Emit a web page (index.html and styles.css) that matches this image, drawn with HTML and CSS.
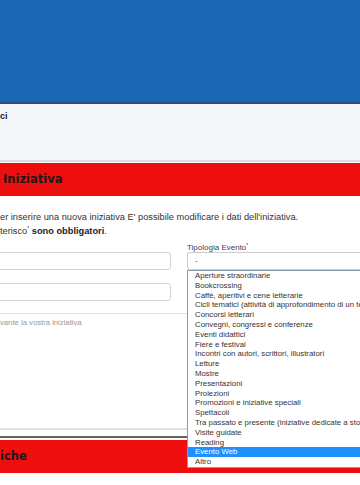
FILE: index.html
```html
<!DOCTYPE html>
<html lang="it">
<head>
<meta charset="utf-8">
<title>Nuova Iniziativa</title>
<link rel="stylesheet" href="styles.css">
</head>
<body>
<header class="topbar"></header>
<section class="notice">
  <p class="notice-text">ci</p>
</section>
<h2 class="section-title">Iniziativa</h2>
<div class="form-area">
  <p class="intro">er inserire una nuova iniziativa E' possibile modificare i dati dell'iniziativa.<br>terisco<sup>*</sup> <b>sono obbligatori</b>.</p>
  <div class="grid">
    <div class="col-left">
      <div class="spacer-label"></div>
      <div class="input"></div>
      <div class="input second"></div>
    </div>
    <div class="col-right">
      <label class="label">Tipologia Evento<sup>*</sup></label>
      <div class="select-wrap">
        <div class="select">-</div>
        <ul class="dropdown">
          <li>Aperture straordinarie</li>
          <li>Bookcrossing</li>
          <li>Caffè, aperitivi e cene letterarie</li>
          <li>Cicli tematici (attività di approfondimento di un tema)</li>
          <li>Concorsi letterari</li>
          <li>Convegni, congressi e conferenze</li>
          <li>Eventi didattici</li>
          <li>Fiere e festival</li>
          <li>Incontri con autori, scrittori, illustratori</li>
          <li>Letture</li>
          <li>Mostre</li>
          <li>Presentazioni</li>
          <li>Proiezioni</li>
          <li>Promozioni e iniziative speciali</li>
          <li>Spettacoli</li>
          <li>Tra passato e presente (iniziative dedicate a storia e memoria)</li>
          <li>Visite guidate</li>
          <li>Reading</li>
          <li class="selected">Evento Web</li>
          <li>Altro</li>
        </ul>
      </div>
    </div>
  </div>
  <div class="rule"></div>
  <p class="hint">vante la vostra iniziativa</p>
  <div class="blank"></div>
</div>
<div class="rule light"></div>
<div class="rule dark"></div>
<h2 class="section-title second">iche</h2>
</body>
</html>
```
FILE: styles.css
```css
html, body {
  margin: 0;
  padding: 0;
  overflow: hidden;
  background: #fff;
  font-family: "Liberation Sans", Arial, sans-serif;
}
.topbar {
  height: 102px;
  background: #1a66b2;
  border-bottom: 2px solid #33488a;
}
.notice {
  height: 58px;
  background: #f3f7f9;
  border-bottom: 2px solid #dcdcdc;
  box-sizing: border-box;
}
.notice-text {
  margin: 0;
  padding-top: 7px;
  font-size: 9px;
  font-weight: bold;
  color: #222;
}
.section-title {
  margin: 1px 0 0;
  height: 33px;
  background: #ee0e0e;
  color: #1a1a1a;
  font-family: "DejaVu Sans", Verdana, sans-serif;
  font-weight: bold;
  font-size: 11.5px;
  line-height: 33px;
  padding-left: 3px;
}
.section-title.second {
  margin-top: 2px;
  padding-left: 0;
}
.form-area {
  padding-top: 16px;
}
.intro {
  margin: 0;
  font-size: 9.25px;
  line-height: 11px;
  color: #333;
}
.intro sup {
  font-size: 5px;
  vertical-align: 4px;
}
.intro b {
  color: #222;
}
.grid {
  display: grid;
  grid-template-columns: 175px 1fr;
  gap: 16px;
  margin-top: 3px;
  margin-left: -4px;
}
.spacer-label {
  height: 12px;
}
.input {
  height: 18px;
  border: 1px solid #d4d4d4;
  border-radius: 3px;
  box-sizing: border-box;
}
.input.second {
  margin-top: 13px;
}
.label {
  display: block;
  height: 12px;
  font-size: 8px;
  line-height: 10px;
  color: #444;
}
.label sup {
  font-size: 5px;
  vertical-align: 3px;
}
.select-wrap {
  position: relative;
}
.select {
  height: 18px;
  border: 1px solid #ccc;
  border-right: none;
  border-radius: 3px 0 0 3px;
  box-sizing: border-box;
  font-size: 8px;
  line-height: 16px;
  padding-left: 7px;
  color: #555;
}
.dropdown {
  position: absolute;
  left: 0;
  top: 18px;
  width: 200px;
  margin: 0;
  padding: 0;
  list-style: none;
  background: #fff;
  border: 1px solid #8a9ab0;
  font-size: 7.8px;
  line-height: 9.8px;
  color: #333;
  white-space: nowrap;
  z-index: 2;
}
.dropdown li {
  padding-left: 7px;
}
.dropdown li.selected {
  background: #1e90ff;
  color: #fff;
}
.rule {
  height: 1px;
  background: #e3e3e3;
  margin-top: 12px;
}
.hint {
  margin: 4px 0 0;
  font-size: 7.7px;
  line-height: 10px;
  color: #999;
}
.blank {
  height: 100px;
}
.rule.light {
  margin-top: 0;
  height: 2px;
  background: #e0e0e0;
}
.rule.dark {
  margin-top: 6px;
  height: 2px;
  background: #666;
}
```
